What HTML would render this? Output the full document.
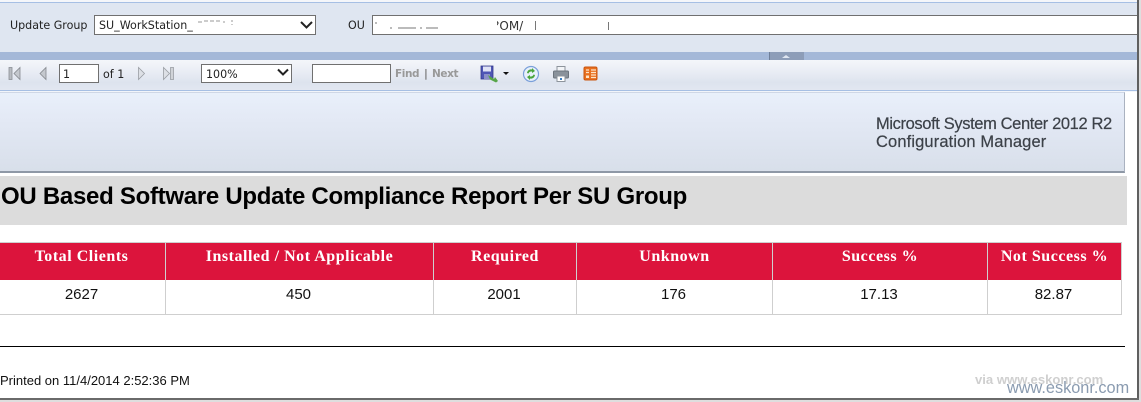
<!DOCTYPE html>
<html><head><meta charset="utf-8"><style>
html,body{margin:0;padding:0;background:#fff}
body{width:1141px;height:402px;position:relative;overflow:hidden;font-family:"Liberation Sans",sans-serif}
.a{position:absolute;white-space:nowrap}
.t{font-family:"DejaVu Sans",sans-serif;font-size:11.100px;color:#222}
.box{position:absolute;background:#fff;border:1px solid #707070;box-sizing:border-box}
.th{position:absolute;top:243px;height:37px;background:#dc143c;color:#fff;font:bold 16px "Liberation Serif",serif;text-align:center;line-height:28px;letter-spacing:.53px}
.td{position:absolute;top:281px;height:33px;color:#111;font:15px "Liberation Sans",sans-serif;text-align:center;line-height:28px;margin-left:-1px}
.v{position:absolute;top:242px;height:73px;width:1px;background:#cfcfcf}
</style></head><body>
<div class="a" style="left:0;top:0;width:1137px;height:2px;background:#f4f6fa"></div>
<div class="a" style="left:0;top:2px;width:1137px;height:1px;background:#a6bfe4"></div>
<div class="a" style="left:0;top:3px;width:1137px;height:49px;background:#dfe6f1"></div>
<div class="a t" style="left:10px;top:19px">Update Group</div>
<div class="box" style="left:94px;top:15px;width:222px;height:20px"></div>
<div class="a t" style="left:99px;top:19px">SU_WorkStation_</div>
<svg class="a" style="left:196px;top:18px" width="46" height="10"><path d="M2 4h4M8 3h4M14 3h4M20 3h4M28 3v2M36 2v2M36 6v1" stroke="#999" fill="none"/></svg>
<svg class="a" style="left:299px;top:20px" width="15" height="10"><path d="M2 2l5.500 5.500L13 2" stroke="#222" stroke-width="2" fill="none"/></svg>
<div class="a t" style="left:348px;top:19px">OU</div>
<div class="box" style="left:372px;top:15px;width:765px;height:20px;border-right:0"></div>
<div class="a t" style="left:493px;top:19px;color:#333;font-size:12px">?OM/</div>
<div class="a" style="left:493px;top:20px;width:4px;height:12px;background:#fff"></div>
<svg class="a" style="left:374px;top:20px" width="250" height="12"><path d="M2 2v2M16 8h2M24 8h18M46 8h2M52 8h12M161.500 1v9M234.500 2v8" stroke="#777" fill="none"/></svg>
<div class="a" style="left:0;top:52px;width:1137px;height:8px;background:#a4b8d8"></div>
<div class="a" style="left:769px;top:52px;width:35px;height:8px;background:#8d9db8;border-left:1px solid #6f7f99;box-sizing:border-box"></div>
<svg class="a" style="left:780px;top:54px" width="12" height="5"><path d="M2 4l4-3 4 3z" fill="#dfe6f1"/></svg>
<div class="a" style="left:0;top:60px;width:1137px;height:30px;background:linear-gradient(#f4f6fa 0,#e6eaf3 50%,#dde3ee 75%,#e2e7f1 100%)"></div>
<div class="a" style="left:0;top:90px;width:1137px;height:1px;background:#a6bfe4"></div>
<div class="a" style="left:0;top:91px;width:1137px;height:1px;background:#f2f5fa"></div>
<svg class="a" style="left:0;top:60px" width="180" height="30">
<rect x="9" y="7.500" width="3" height="12" fill="#b8bcc2" stroke="#8a8e94" stroke-width=".8"/>
<path d="M20 7.500v12l-6-6zM46 7.500v12l-6-6z" fill="#c4c8ce" stroke="#85898f" stroke-width=".8"/>
<path d="M138.500 7.500v12l6-6zM163.500 7.500v12l6-6z" fill="#dde0e6" stroke="#9a9ea4" stroke-width=".8"/>
<rect x="170.500" y="7.500" width="3" height="12" fill="#d0d3d8" stroke="#9a9ea4" stroke-width=".8"/>
</svg>
<div class="box" style="left:59px;top:64px;width:40px;height:19px"></div>
<div class="a t" style="left:63px;top:68px">1</div>
<div class="a t" style="left:103px;top:68px">of 1</div>
<div class="box" style="left:201px;top:64px;width:91px;height:19px"></div>
<div class="a t" style="left:206px;top:68px">100%</div>
<svg class="a" style="left:276px;top:68px" width="14" height="10"><path d="M2 1.500l5 5 5-5" stroke="#222" stroke-width="2" fill="none"/></svg>
<div class="box" style="left:312px;top:64px;width:79px;height:19px"></div>
<div class="a" style="left:395px;top:68px;font:bold 10.500px 'DejaVu Sans',sans-serif;color:#999;letter-spacing:-.4px">Find</div>
<div class="a" style="left:424px;top:68px;font:bold 10.500px 'DejaVu Sans',sans-serif;color:#777">|</div>
<div class="a" style="left:432px;top:68px;font:bold 10.500px 'DejaVu Sans',sans-serif;color:#999;letter-spacing:-.4px">Next</div>
<svg class="a" style="left:480px;top:64px" width="32" height="20">
<rect x="1" y="2" width="12" height="13" fill="#4e55b5" stroke="#343a8c" stroke-width=".8"/>
<rect x="3" y="2.500" width="8" height="5" fill="#dfe2f5"/>
<rect x="4" y="10" width="6" height="5" fill="#8b90c8"/>
<path d="M8 11l6 4 1-2 3 4-2 1.500-6-3 0 0z" fill="#57a548"/>
<path d="M23 8h6l-3 3z" fill="#111"/>
</svg>
<svg class="a" style="left:522px;top:65px" width="18" height="18">
<circle cx="9" cy="9" r="7.500" fill="#e8f0fb" stroke="#7ba0da" stroke-width="1.200"/>
<path d="M5 8c.5-3 3-4 5-3.500L10 3l3 3-3 2V6.500C8 6.300 7 7 6.500 8.500z" fill="#4aa53c"/>
<path d="M13 10c-.5 3-3 4-5 3.500L8 15l-3-3 3-2v1.500c2 .2 3-.5 3.500-2z" fill="#4aa53c"/>
</svg>
<svg class="a" style="left:552px;top:65px" width="18" height="18">
<rect x="5" y="1.500" width="8" height="5" fill="#f2f4f7" stroke="#8d949c"/>
<rect x="1.500" y="6" width="15" height="7" rx="1" fill="#8a929b" stroke="#6c747d"/>
<rect x="5" y="11" width="8" height="5.500" fill="#fff" stroke="#8d949c"/>
<rect x="8" y="13" width="2" height="2" fill="#3a7fc4"/>
</svg>
<svg class="a" style="left:583px;top:66px" width="16" height="16">
<rect x=".5" y=".5" width="13" height="13" rx="1.500" fill="#e8701f" stroke="#c9550f" transform="translate(.5 .5)"/>
<path d="M3 4h3M8 4h5M3 6.500h3M8 6.500h5M8 9h5M8 11.500h5" stroke="#fde4c8" stroke-width="1.200"/>
<rect x="3" y="9.500" width="3" height="2.500" fill="#fde4c8"/>
</svg>
<div class="a" style="left:0;top:92px;width:1125px;height:81px;box-sizing:border-box;background:linear-gradient(#e9f0fb 0,#e3e9f5 35%,#d8dfea 100%);border-bottom:2px solid #8e98a6;border-right:1px solid #aab2c0;border-top:1px solid #cfd7e6"></div>
<div class="a" style="left:876px;top:115px;font:16.500px/18px 'Liberation Sans',sans-serif;color:#3c4148;letter-spacing:-.38px;-webkit-text-stroke:.2px #3c4148">Microsoft System Center 2012 R2<br><span style="letter-spacing:.12px">Configuration Manager</span></div>
<div class="a" style="left:0;top:176px;width:1127px;height:49px;background:#dcdcdc"></div>
<div class="a" style="left:1px;top:183px;font:bold 24px 'Liberation Sans',sans-serif;color:#000;letter-spacing:-.28px">OU Based Software Update Compliance Report Per SU Group</div>
<div class="a" style="left:0;top:242px;width:1122px;height:73px;background:#fff;border-top:1px solid #cfcfcf;border-bottom:1px solid #cfcfcf;box-sizing:border-box"></div>
<div class="th" style="left:-1px;width:165px">Total Clients</div>
<div class="th" style="left:0;width:165px;background:none">&nbsp;</div>
<div class="th" style="left:166px;width:267px">Installed / Not Applicable</div>
<div class="th" style="left:434px;width:142px">Required</div>
<div class="th" style="left:577px;width:195px">Unknown</div>
<div class="th" style="left:773px;width:214px">Success %</div>
<div class="th" style="left:988px;width:133px">Not Success %</div>
<div class="a" style="left:164px;top:243px;width:1px;height:37px;background:#dc143c"></div>
<div class="td" style="left:0;width:165px">2627</div>
<div class="td" style="left:166px;width:267px">450</div>
<div class="td" style="left:434px;width:142px">2001</div>
<div class="td" style="left:577px;width:195px">176</div>
<div class="td" style="left:773px;width:214px">17.13</div>
<div class="td" style="left:988px;width:133px">82.87</div>
<div class="v" style="left:165px"></div><div class="v" style="left:433px"></div><div class="v" style="left:576px"></div><div class="v" style="left:772px"></div><div class="v" style="left:987px"></div><div class="v" style="left:1121px"></div>
<div class="a" style="left:0;top:346px;width:1125px;height:1px;background:#000"></div>
<div class="a" style="left:0;top:373px;font:13px 'Liberation Sans',sans-serif;color:#111">Printed on 11/4/2014 2:52:36 PM</div>
<div class="a" style="left:975px;top:372px;font:bold 13.100px 'Liberation Sans',sans-serif;color:#cfcfcf">via www.eskonr.com</div>
<div class="a" style="left:1007px;top:379px;font:16.300px 'Liberation Sans',sans-serif;color:#8a9bb0">www.eskonr.com</div>
<div class="a" style="left:1137px;top:0;width:2px;height:400px;background:#5f5f5f"></div>
<div class="a" style="left:0;top:398px;width:1139px;height:2px;background:#6a6a6a"></div>
<div class="a" style="left:1139px;top:0;width:2px;height:402px;background:#dedede"></div>
<div class="a" style="left:0;top:400px;width:1141px;height:2px;background:#dedede"></div>
</body></html>
